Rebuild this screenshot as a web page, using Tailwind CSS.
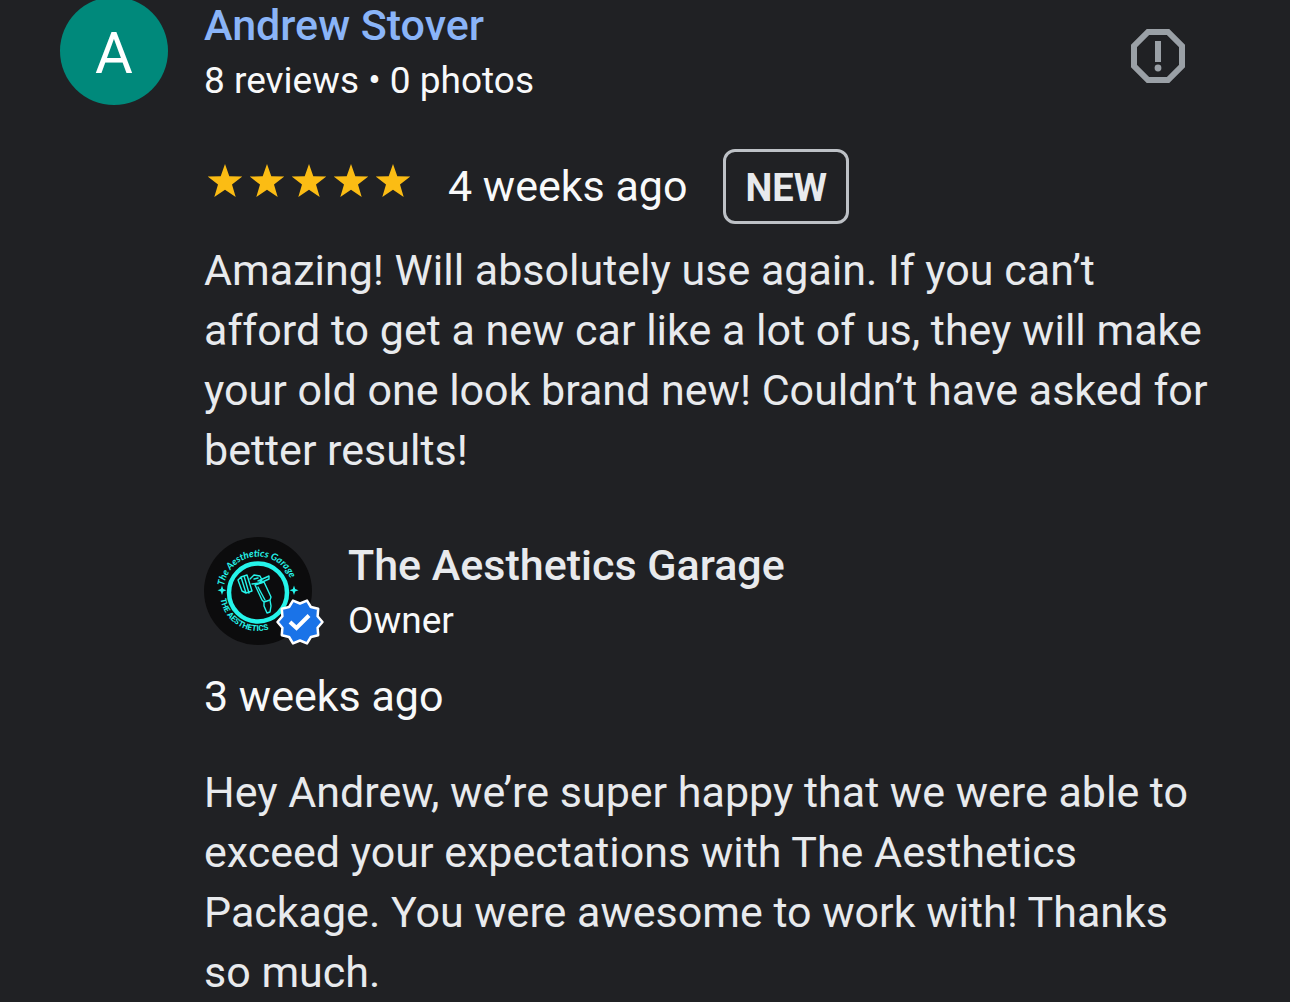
<!DOCTYPE html>
<html lang="en">
<head>
  <meta charset="UTF-8" />
  <meta name="viewport" content="width=device-width, initial-scale=1.0" />
  <title>Review - The Aesthetics Garage</title>
  <script src="https://cdn.jsdelivr.net/npm/@tailwindcss/browser@4"></script>
</head>
<body class="bg-[#202124] text-[#e8eaed] font-['Roboto',sans-serif] overflow-hidden">
  <article class="flex items-start gap-9 -mt-[3px] pl-[60px] pr-[72px]">
    <!-- Reviewer avatar -->
    <div class="shrink-0 w-[108px] h-[108px] pt-1 rounded-full bg-[#00897b] text-white text-[58px] flex items-center justify-center">A</div>

    <div class="flex-1 min-w-0">
      <header class="flex items-start justify-between pr-[33px]">
        <div>
          <h2 class="text-[43px] leading-[56px] font-medium"><a href="#" class="text-[#8ab4f8]">Andrew Stover</a></h2>
          <p class="text-[37px] leading-[56px] text-[#f8f9fa]">8 reviews • 0 photos</p>
        </div>
        <button type="button" aria-label="Report review" class="mt-8">
          <svg class="w-[54px] h-[54px]" viewBox="0 0 54 54">
            <path d="M17 3H37L51 17V37L37 51H17L3 37V17Z" fill="none" stroke="#9aa0a6" stroke-width="6" />
            <path d="M24 12H30V33H24Z" fill="#9aa0a6" />
            <circle cx="27" cy="39" r="3.4" fill="#9aa0a6" />
          </svg>
        </button>
      </header>

      <!-- Rating -->
      <div class="mt-10 flex items-center gap-9">
        <svg role="img" aria-label="5 stars" class="w-[208px] h-[42px] -mt-2.5" viewBox="0 0 208 42" fill="#fbbc14">
          <defs>
            <path id="star" d="M21 3L25.3 15.3L38.3 15.5L28 23.6L31.7 36L21 28.8L10.3 36L14 23.6L3.7 15.5L16.7 15.3Z" />
          </defs>
          <use href="#star" />
          <use href="#star" x="42" />
          <use href="#star" x="84" />
          <use href="#star" x="126" />
          <use href="#star" x="168" />
        </svg>
        <span class="pb-0.5 text-[43px] leading-[60px] text-[#f8f9fa]">4 weeks ago</span>
        <span class="h-[75px] px-[19px] pt-1 flex items-center border-[3px] border-[#bdc1c6] rounded-xl text-[38px] font-bold">NEW</span>
      </div>

      <p class="mt-4 text-[43px] leading-[60px]">Amazing! Will absolutely use again. If you can’t<br />afford to get a new car like a lot of us, they will make<br />your old one look brand new! Couldn’t have asked for<br />better results!</p>

      <!-- Owner reply -->
      <section class="mt-[57px]">
        <header class="flex items-start gap-9">
          <div class="relative shrink-0 w-[108px] h-[108px]">
            <svg class="w-full h-full" viewBox="0 0 108 108">
              <defs>
                <path id="arcTop" d="M20 49A34.500 34.500 0 0 1 88.500 51" />
                <path id="arcBottom" d="M16 56A38 38 0 0 0 92 56" />
              </defs>
              <circle cx="54" cy="54" r="54" fill="#0c0c0d" />
              <g fill="#25f4ea">
                <text font-family="Lato, sans-serif" font-size="9.6" font-style="italic" font-weight="700"><textPath href="#arcTop">The Aesthetics Garage</textPath></text>
                <text font-family="Roboto, sans-serif" font-size="8" font-weight="700"><textPath href="#arcBottom" startOffset="6">THE AESTHETICS</textPath></text>
                <path d="M18 48.5L19.2 52L22.5 53.2L19.2 54.4L18 58L16.8 54.4L13.5 53.2L16.8 52Z" />
                <path d="M90 48.5L91.2 52L94.5 53.2L91.2 54.4L90 58L88.8 54.4L85.5 53.2L88.8 52Z" />
              </g>
              <g fill="none" stroke="#25f4ea">
                <circle cx="54" cy="55.5" r="29" stroke-width="4.5" />
                <!-- Polisher -->
                <g stroke-width="1.4" stroke-linejoin="round" stroke-linecap="round">
                  <path d="M34 43L38 54M37 40L42 56M40 39L45 56M43 38L48 54M34 43L37 40L43 38M38 54L42 56L48 54" />
                  <path d="M46 42L50 38L56 39L58 43L55 46L48 47M54 44L65 39L65 42L56 46M50 42L54 41" />
                  <path d="M51 48L60 45L67 60L66 63L60 65L58 63ZM54 50L61 63M60 65L60 69L63 76L66 75L67 69L66 63" />
                </g>
              </g>
            </svg>
            <!-- Verified badge -->
            <svg class="absolute left-[71px] top-[60px] w-[50px] h-[50px]" viewBox="0 0 50 50">
              <path d="M47.5 25L42.6 30.7L43.2 38.2L35.9 40L32 46.4L25 43.5L18 46.4L14.1 40L6.8 38.2L7.4 30.7L2.5 25L7.4 19.3L6.8 11.8L14.1 10L18 3.6L25 6.5L32 3.6L35.9 10L43.2 11.8L42.6 19.3Z" fill="#1a73e8" stroke="#fff" stroke-width="2.5" stroke-linejoin="round" />
              <path d="M15 25L21.5 31L34 18.5" fill="none" stroke="#fff" stroke-width="4" />
            </svg>
          </div>
          <div>
            <h3 class="text-[43px] leading-[56px] font-medium">The Aesthetics Garage</h3>
            <p class="text-[37px] leading-[56px] text-[#f8f9fa]">Owner</p>
          </div>
        </header>
        <p class="mt-[17px] text-[43px] leading-[60px] text-[#f8f9fa]">3 weeks ago</p>
        <p class="mt-9 text-[43px] leading-[60px]">Hey Andrew, we’re super happy that we were able to<br />exceed your expectations with The Aesthetics<br />Package. You were awesome to work with! Thanks<br />so much.</p>
      </section>
    </div>
  </article>
</body>
</html>
